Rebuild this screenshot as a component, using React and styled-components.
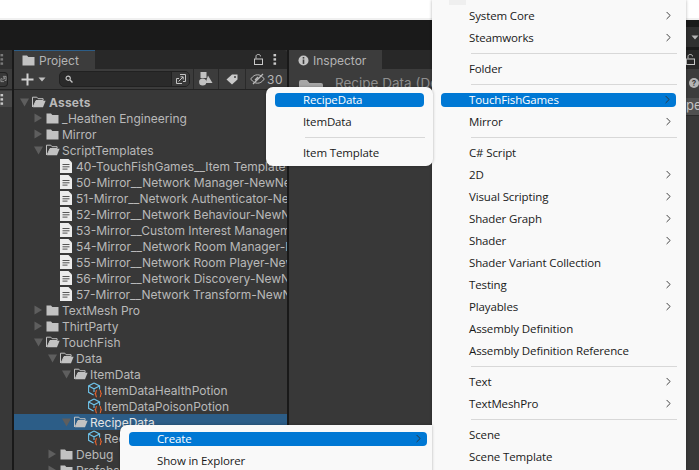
import React from "react";
import styled, { createGlobalStyle } from "styled-components";
import { ChevronRight } from "lucide-react";

const Global = createGlobalStyle`
  html, body { margin: 0; padding: 0; background: #fff; }
  body { width: 699px; height: 470px; overflow: hidden; }
`;

const Page = styled.div`
  position: relative;
  width: 699px;
  height: 470px;
  overflow: hidden;
  display: flex;
  flex-direction: column;
  font-family: Inter, "Noto Sans", sans-serif;
`;

const TopStrip = styled.div`
  height: 18px;
  background: #fff;
  border-bottom: 2px solid #f0f0f0;
`;

const TitleBar = styled.div`
  height: 30px;
  background: #1a1a1a;
`;

const Dock = styled.div`
  flex: 1;
  display: flex;
  gap: 2px;
  background: #191919;
  min-height: 0;
`;

const SideStub = styled.div`
  width: 12px;
  background: #383838;
  display: flex;
  flex-direction: column;
`;

const StubHead = styled.div`
  height: 19px;
  background: #282828;
  display: flex;
  align-items: center;
  opacity: 0.45;
`;

const StubTools = styled.div`
  height: 20px;
  background: #3c3c3c;
  border-bottom: 1px solid #232323;
  display: flex;
  align-items: center;
`;

const StubBox = styled.div`
  width: 8px;
  height: 15px;
  background: #383838;
  border: 1px solid #212121;
  border-left: 0;
  border-radius: 0 4px 4px 0;
  box-sizing: border-box;
  display: flex;
  align-items: center;
  justify-content: flex-end;
  overflow: hidden;
`;

const StubRow = styled.div`
  height: 16px;
  margin-top: 1px;
  background: #474747;
  display: flex;
  align-items: center;
`;

const Panel = styled.div`
  width: ${(p) => p.$w}px;
  flex: ${(p) => (p.$w ? "none" : 1)};
  background: #383838;
  display: flex;
  flex-direction: column;
`;

const TabBar = styled.div`
  height: 19px;
  background: #282828;
  display: flex;
  align-items: stretch;
  border-radius: 3px 3px 0 0;
`;

const Tab = styled.div`
  width: ${(p) => p.$w}px;
  background: #3c3c3c;
  border-top: 1px solid ${(p) => (p.$active ? "#2c5d87" : "#3c3c3c")};
  color: #b4b4b4;
  font-size: 12px;
  display: flex;
  align-items: center;
  gap: 4px;
  padding: 1px 0 0 ${(p) => p.$pad}px;
  box-sizing: border-box;
`;

const TabTools = styled.div`
  margin-left: auto;
  display: flex;
  align-items: center;
  gap: 10px;
  padding-right: 10px;
`;

const Toolbar = styled.div`
  height: 20px;
  background: #3c3c3c;
  border-bottom: 1px solid #232323;
  display: flex;
  align-items: center;
`;

const AddButton = styled.div`
  width: 45px;
  display: flex;
  align-items: center;
  padding-left: 7px;
  gap: 4px;
  box-sizing: border-box;
`;

const Search = styled.div`
  width: 131px;
  height: 16px;
  margin-right: 3px;
  background: #2a2a2a;
  border: 1px solid #212121;
  border-radius: 5px;
  display: flex;
  align-items: center;
  padding-left: 5px;
  box-sizing: border-box;
`;

const SearchExpand = styled.div`
  margin-left: auto;
  width: 17px;
  height: 14px;
  background: #383838;
  border-left: 1px solid #212121;
  border-radius: 0 4px 4px 0;
  display: flex;
  align-items: center;
  justify-content: center;
`;

const ToolCell = styled.div`
  width: ${(p) => p.$w}px;
  height: 20px;
  border-left: 1px solid #2a2a2a;
  display: flex;
  align-items: center;
  justify-content: center;
  gap: 2px;
  color: #b4b4b4;
  font-size: 12px;
  letter-spacing: 0.5px;
  box-sizing: border-box;
`;

const Tree = styled.div`
  padding-top: 4px;
  overflow: hidden;
  flex: 1;
`;

const Row = styled.div`
  height: 16px;
  display: flex;
  align-items: center;
  padding-left: ${(p) => 4 + p.$depth * 14}px;
  background: ${(p) => (p.$selected ? "#2c5d87" : "transparent")};
  color: ${(p) => (p.$selected ? "#e4e4e4" : "#b9b9b9")};
  font-size: 12px;
  font-weight: ${(p) => (p.$bold ? 700 : 400)};
  letter-spacing: ${(p) => (p.$bold ? "0.2px" : "0")};
  white-space: nowrap;
  overflow: hidden;
`;

const Arrow = styled.span`
  width: 14px;
  flex: none;
  display: flex;
  align-items: center;
  padding-left: 1px;
  box-sizing: border-box;
`;

const RowIcon = styled.span`
  width: ${(p) => (p.$bold ? 17 : 16)}px;
  flex: none;
  display: flex;
  align-items: center;
`;

const InspectorHead = styled.div`
  height: 20px;
  background: #3c3c3c;
  display: flex;
  align-items: flex-start;
  padding: 8px 0 0 10px;
  gap: 12px;
  color: #8f8f8f;
  font-size: 13.5px;
  line-height: 1;
  white-space: nowrap;
  overflow: hidden;
`;

const InspectorIcon = styled.span`
  display: flex;
  margin-top: 3px;
`;

const RightStub = styled.div`
  position: absolute;
  top: 20px;
  right: 0;
  bottom: 0;
  width: 13px;
  background: #383838;
  display: flex;
  flex-direction: column;
  overflow: hidden;
`;

const RightBlack = styled.div`
  height: ${(p) => p.$h}px;
  background: #1a1a1a;
`;

const RightMenuBar = styled.div`
  height: 20px;
  background: #2f2f2f;
  display: flex;
  align-items: center;
  justify-content: flex-end;
`;

const RightTab = styled.div`
  height: 19px;
  background: #282828;
  display: flex;
  align-items: center;
`;

const RightHelp = styled.div`
  height: 27px;
  background: #3c3c3c;
  display: flex;
  align-items: center;
  padding: 0 0 2px 3px;
`;

const HelpDot = styled.div`
  width: 10px;
  height: 10px;
  flex: none;
  border-radius: 50%;
  background: #b4b4b4;
  color: #3c3c3c;
  font-size: 8px;
  font-weight: 700;
  display: flex;
  align-items: center;
  justify-content: center;
`;

const PeChip = styled.div`
  height: 17px;
  background: #505050;
  border-bottom: 1px solid #2a2a2a;
  color: #c4c4c4;
  font-size: 13px;
  line-height: 15px;
`;

const Menu = styled.div`
  position: absolute;
  left: ${(p) => p.$x}px;
  top: ${(p) => p.$y}px;
  width: ${(p) => p.$w}px;
  height: ${(p) => p.$h}px;
  background: #f9f9f9;
  border-radius: ${(p) => p.$radius || "7px"};
  box-shadow: 0 0 3px rgba(0, 0, 0, 0.3);
  padding-top: ${(p) => p.$top}px;
  box-sizing: border-box;
  font-family: "Open Sans", "Noto Sans", sans-serif;
  overflow: hidden;
  display: flex;
  flex-direction: column;
  z-index: ${(p) => p.$z || 1};
`;

const ScrollNub = styled.div`
  position: absolute;
  left: 17px;
  top: 0;
  width: 17px;
  height: 5px;
  background: #efefef;
`;

const MenuItem = styled.div`
  flex: none;
  height: 14px;
  margin: 4px ${(p) => p.$mr ?? 9}px 4px 9px;
  padding: 0 2px 2px 28px;
  box-sizing: border-box;
  border-radius: 4px;
  display: flex;
  align-items: center;
  justify-content: space-between;
  font-size: 11.5px;
  letter-spacing: -0.13px;
  color: ${(p) => (p.$active ? "#fff" : "#1a1a1a")};
  background: ${(p) => (p.$active ? "#0078d4" : "transparent")};
  white-space: nowrap;
`;

const MenuSep = styled.div`
  flex: none;
  height: 1px;
  background: #d8d8d8;
  margin: 4px ${(p) => p.$mr ?? 9}px 4px 39px;
`;

const Wedge = ({ open }) => (
  <svg width="11" height="10" viewBox="0 0 11 10">
    {open ? (
      <path d="M1 1.5h9L5.5 9.5z" fill="#5e5e5e" />
    ) : (
      <path d="M1.5 0.5v9l7.5-4.5z" fill="#5e5e5e" />
    )}
  </svg>
);

const Folder = ({ open }) =>
  open ? (
    <svg width="14" height="12" viewBox="0 0 14 12">
      <path d="M0.5 11V1.2h4.3l1.3 1.5h5v1.8H4L1.4 10.4" fill="none" stroke="#c2c2c2" strokeWidth="1" />
      <path d="M4 4.8h9.6L11 11.2H0.9z" fill="#c2c2c2" />
    </svg>
  ) : (
    <svg width="13" height="11" viewBox="0 0 13 11">
      <path d="M0.5 0.5h4.5l1.3 1.5h6.2v8.5H0.5z" fill="#c2c2c2" />
    </svg>
  );

const BigFolder = () => (
  <svg width="24" height="18" viewBox="0 0 24 18">
    <path d="M0 2a2 2 0 0 1 2-2h6l2.5 3H22a2 2 0 0 1 2 2v13H0z" fill="#a6a6a6" />
  </svg>
);

const Doc = () => (
  <svg width="12" height="14" viewBox="0 0 12 14">
    <path d="M0 0h8.5L12 3.5V14H0z" fill="#ececec" />
    <path d="M2.5 5.5h7M2.5 7.8h7M2.5 10.1h5" stroke="#555" strokeWidth="1" />
  </svg>
);

const CubeAsset = () => (
  <svg width="14" height="16" viewBox="0 0 14 16">
    <path d="M6 1L11.6 3.9V7.5M6 1L.6 3.9v6.4L5.6 13M.6 3.9L6 6.8l5.6-2.9M6 6.8V10" fill="none" stroke="#6ec3ea" strokeWidth="1.1" />
    <path d="M8.8 8.4c-1.3 0-.5 2.8-1.5 3.3 1 .5.2 3.3 1.5 3.3M11.8 8.4c1.3 0 .5 2.8 1.5 3.3-1 .5-.2 3.3-1.5 3.3" fill="none" stroke="#f0662e" strokeWidth="1.1" />
  </svg>
);

const Plus = () => (
  <svg width="13" height="13" viewBox="0 0 13 13">
    <path d="M6.5 0.5v12M0.5 6.5h12" stroke="#d0d0d0" strokeWidth="2" />
  </svg>
);

const Caret = ({ color = "#c0c0c0" }) => (
  <svg width="8" height="5" viewBox="0 0 8 5">
    <path d="M0.5 0.5h7L4 4.5z" fill={color} />
  </svg>
);

const Magnifier = () => (
  <svg width="8" height="8" viewBox="0 0 9 9">
    <circle cx="3.6" cy="3.6" r="2.4" fill="none" stroke="#c4c4c4" strokeWidth="1.3" />
    <path d="M5.4 5.4L8.4 8.4" stroke="#c4c4c4" strokeWidth="1.5" />
  </svg>
);

const Expand = () => (
  <svg width="12" height="12" viewBox="0 0 12 12">
    <path d="M5 1.5h5.5v7H8M7 10.5H1.5v-5H4" fill="none" stroke="#c4c4c4" strokeWidth="1" />
    <path d="M3.5 8.5L8 4M5.5 3.8H8.2v2.7" fill="none" stroke="#c4c4c4" strokeWidth="1" />
  </svg>
);

const Shapes = () => (
  <svg width="14" height="14" viewBox="0 0 14 14">
    <rect x="1.5" y="0" width="6" height="6" fill="#c2c2c2" />
    <circle cx="3.7" cy="10" r="3.6" fill="#c2c2c2" />
    <path d="M9 3.5l4.5 7.5H6.5z" fill="#c2c2c2" />
  </svg>
);

const TagIcon = () => (
  <svg width="12" height="11" viewBox="0 0 12 11">
    <path d="M0.5 5.5L6 0.5h5.5v5L6 10.5z" fill="#c9c9c9" />
    <circle cx="9" cy="3" r="1" fill="#3c3c3c" />
  </svg>
);

const EyeOff = () => (
  <svg width="15" height="12" viewBox="0 0 15 12">
    <path d="M0.7 6C3 2.8 5.2 1.8 7.5 1.8S12 2.8 14.3 6C12 9.2 9.8 10.2 7.5 10.2S3 9.2 0.7 6z" fill="none" stroke="#b9b9b9" strokeWidth="1" />
    <path d="M3 11L13 1M5 7l3-3" stroke="#b9b9b9" strokeWidth="1.3" />
  </svg>
);

const Lock = () => (
  <svg width="9" height="11" viewBox="0 0 9 11">
    <path d="M2 4.5V2.6C2 1 3 .5 4.3.5S6.5 1 6.5 2.4" fill="none" stroke="#c9c9c9" strokeWidth="1" />
    <rect x="0.5" y="5" width="8" height="5.5" fill="none" stroke="#c9c9c9" strokeWidth="1" />
  </svg>
);

const Kebab = () => (
  <svg width="4" height="11" viewBox="0 0 4 11">
    <rect x="0.5" y="0" width="2.6" height="2.4" fill="#c9c9c9" />
    <rect x="0.5" y="4.2" width="2.6" height="2.4" fill="#c9c9c9" />
    <rect x="0.5" y="8.4" width="2.6" height="2.4" fill="#c9c9c9" />
  </svg>
);

const InfoIcon = () => (
  <svg width="11" height="11" viewBox="0 0 11 11">
    <circle cx="5.5" cy="5.5" r="5" fill="#c4c4c4" />
    <rect x="4.7" y="2" width="1.6" height="1.6" fill="#3c3c3c" />
    <rect x="4.7" y="4.5" width="1.6" height="4.4" fill="#3c3c3c" />
  </svg>
);

const Sub = ({ color = "#333" }) => <ChevronRight size={13} color={color} strokeWidth={1.7} />;

const scripts = [
  "40-TouchFishGames__Item Template",
  "50-Mirror__Network Manager-NewNetworkManager",
  "51-Mirror__Network Authenticator-NewNetworkAuthenticator",
  "52-Mirror__Network Behaviour-NewNetworkBehaviour",
  "53-Mirror__Custom Interest Management-NewInterest",
  "54-Mirror__Network Room Manager-NewRoomManager",
  "55-Mirror__Network Room Player-NewRoomPlayer",
  "56-Mirror__Network Discovery-NewNetworkDiscovery",
  "57-Mirror__Network Transform-NewNetworkTransform",
];

const FolderRow = ({ depth, open, name, bold, selected }) => (
  <Row $depth={depth} $bold={bold} $selected={selected}>
    <Arrow>
      <Wedge open={open} />
    </Arrow>
    <RowIcon $bold={bold}>
      <Folder open={open} />
    </RowIcon>
    {name}
  </Row>
);

const LeafRow = ({ depth, name, kind }) => (
  <Row $depth={depth}>
    <RowIcon>{kind === "cube" ? <CubeAsset /> : <Doc />}</RowIcon>
    {name}
  </Row>
);

const mainMenu = [
  { t: "System Core", sub: true },
  { t: "Steamworks", sub: true },
  { sep: true },
  { t: "Folder" },
  { sep: true },
  { t: "TouchFishGames", sub: true, active: true },
  { t: "Mirror", sub: true },
  { sep: true },
  { t: "C# Script" },
  { t: "2D", sub: true },
  { t: "Visual Scripting", sub: true },
  { t: "Shader Graph", sub: true },
  { t: "Shader", sub: true },
  { t: "Shader Variant Collection" },
  { t: "Testing", sub: true },
  { t: "Playables", sub: true },
  { t: "Assembly Definition" },
  { t: "Assembly Definition Reference" },
  { sep: true },
  { t: "Text", sub: true },
  { t: "TextMeshPro", sub: true },
  { sep: true },
  { t: "Scene" },
  { t: "Scene Template" },
];

const App = () => (
  <Page>
    <Global />
    <TopStrip />
    <TitleBar />
    <Dock>
      <SideStub>
        <StubHead>
          <Kebab />
        </StubHead>
        <StubTools>
          <StubBox>
            <Expand />
          </StubBox>
        </StubTools>
        <StubRow>
          <Kebab />
        </StubRow>
      </SideStub>
      <Panel $w={273}>
        <TabBar>
          <Tab $w={81} $pad={8} $active>
            <Folder />
            Project
          </Tab>
          <TabTools>
            <Lock />
            <Kebab />
          </TabTools>
        </TabBar>
        <Toolbar>
          <AddButton>
            <Plus />
            <Caret />
          </AddButton>
          <Search>
            <Magnifier />
            <SearchExpand>
              <Expand />
            </SearchExpand>
          </Search>
          <ToolCell $w={25}>
            <Shapes />
          </ToolCell>
          <ToolCell $w={27}>
            <TagIcon />
          </ToolCell>
          <ToolCell $w={42}>
            <EyeOff />
            30
          </ToolCell>
        </Toolbar>
        <Tree>
          <FolderRow depth={0} open bold name="Assets" />
          <FolderRow depth={1} name="_Heathen Engineering" />
          <FolderRow depth={1} name="Mirror" />
          <FolderRow depth={1} open name="ScriptTemplates" />
          {scripts.map((s) => (
            <LeafRow key={s} depth={3} name={s} />
          ))}
          <FolderRow depth={1} name="TextMesh Pro" />
          <FolderRow depth={1} name="ThirtParty" />
          <FolderRow depth={1} open name="TouchFish" />
          <FolderRow depth={2} open name="Data" />
          <FolderRow depth={3} open name="ItemData" />
          <LeafRow depth={5} kind="cube" name="ItemDataHealthPotion" />
          <LeafRow depth={5} kind="cube" name="ItemDataPoisonPotion" />
          <FolderRow depth={3} open selected name="RecipeData" />
          <LeafRow depth={5} kind="cube" name="RecipeItem" />
          <FolderRow depth={2} name="Debug" />
          <FolderRow depth={2} name="Prefabs" />
        </Tree>
      </Panel>
      <Panel>
        <TabBar>
          <Tab $w={93} $pad={9}>
            <InfoIcon />
            Inspector
          </Tab>
        </TabBar>
        <InspectorHead>
          <InspectorIcon>
            <BigFolder />
          </InspectorIcon>
          Recipe Data (Default)
        </InspectorHead>
      </Panel>
    </Dock>
    <RightStub>
      <RightBlack $h={7} />
      <RightMenuBar>
        <Caret color="#b4b4b4" />
      </RightMenuBar>
      <RightBlack $h={3} />
      <RightTab>
        <Lock />
      </RightTab>
      <RightHelp>
        <HelpDot>?</HelpDot>
      </RightHelp>
      <PeChip>pe</PeChip>
    </RightStub>

    <Menu $x={432} $y={0} $w={254} $h={470} $radius="0" $top={5} $z={1}>
      <ScrollNub />
      {mainMenu.map((m, i) =>
        m.sep ? (
          <MenuSep key={i} />
        ) : (
          <MenuItem key={m.t} $active={m.active} $mr={m.active ? 10 : 9}>
            {m.t}
            {m.sub && <Sub />}
          </MenuItem>
        )
      )}
    </Menu>
    <Menu $x={266} $y={87} $w={167} $h={79} $top={2} $z={2}>
      <MenuItem $active>RecipeData</MenuItem>
      <MenuItem>ItemData</MenuItem>
      <MenuSep $mr={8} />
      <MenuItem>Item Template</MenuItem>
    </Menu>
    <Menu $x={120} $y={425} $w={312} $h={60} $radius="7px 0 0 0" $top={3} $z={1}>
      <MenuItem $active $mr={5}>
        Create
        <Sub />
      </MenuItem>
      <MenuItem>Show in Explorer</MenuItem>
    </Menu>
  </Page>
);

export default App;
